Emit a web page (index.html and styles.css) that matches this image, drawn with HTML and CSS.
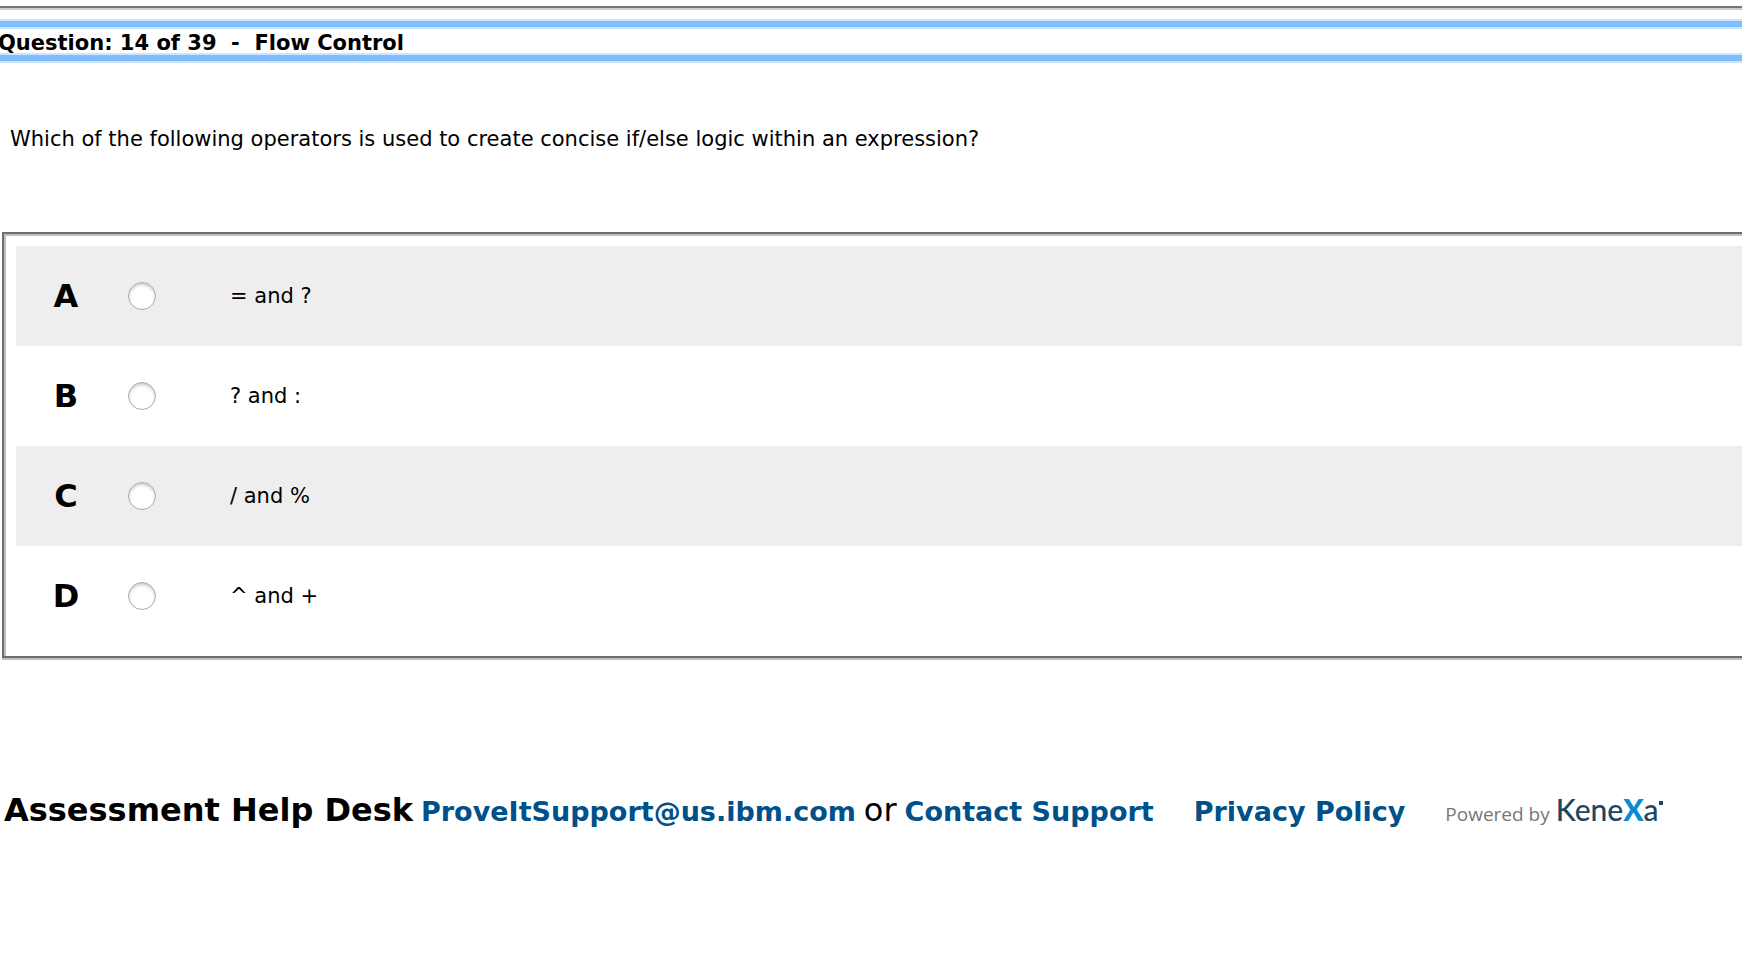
FILE: index.html
```
<!DOCTYPE html>
<html lang="en">
<head>
<meta charset="utf-8">
<title>Question 14 of 39 - Flow Control</title>
<link rel="stylesheet" href="styles.css">
</head>
<body>
<hr class="rule">
<header class="heading">
  <h1 class="heading-text">Question: 14 of 39 &nbsp;- &nbsp;Flow Control</h1>
</header>
<main>
  <p class="question" id="question">Which of the following operators is used to create concise if/else logic within an expression?</p>
  <form class="answers" role="radiogroup" aria-labelledby="question">
    <label class="answer"><span class="letter">A</span><input class="radio" type="radio" name="answer" value="a"><span>= and ?</span></label>
    <label class="answer"><span class="letter">B</span><input class="radio" type="radio" name="answer" value="b"><span>? and :</span></label>
    <label class="answer"><span class="letter">C</span><input class="radio" type="radio" name="answer" value="c"><span>/ and %</span></label>
    <label class="answer"><span class="letter">D</span><input class="radio" type="radio" name="answer" value="d"><span>^ and +</span></label>
  </form>
</main>
<footer class="footer">
  <strong class="desk">Assessment Help Desk</strong>
  <a class="link" href="mailto:ProveItSupport@us.ibm.com">ProveItSupport@us.ibm.com</a>
  <span class="or">or</span>
  <a class="link" href="#support">Contact Support</a>
  <a class="link privacy" href="#privacy">Privacy Policy</a>
  <span class="powered"><span>Powered by</span><span class="brand">Kene<b class="brand-x">X</b>a<i class="brand-mark"></i></span></span>
</footer>
</body>
</html>
```
FILE: styles.css
```
* {
  box-sizing: border-box;
}

body {
  margin: 0;
  background: #fff;
  color: #000;
  font: 21px/26px Verdana, "DejaVu Sans", sans-serif;
  overflow-x: hidden;
}

.rule {
  margin: 6px 0 9px;
  height: 4px;
  border: 0;
  border-top: 2px solid #73737b;
  border-bottom: 2px solid #ccc;
}

.heading {
  border: solid #cce4ff;
  border-width: 2px 0;
}

.heading-text {
  margin: 0;
  padding-top: 3px;
  height: 40px;
  border: solid #80bdff;
  border-width: 6px 0;
  box-shadow: 0 2px #cce4ff, inset 0 2px #cce4ff, inset 0 -2px #cce4ff;
  font-size: 21px;
  line-height: 26px;
  text-indent: -2px;
  white-space: nowrap;
}

.question {
  margin: 63px 10px 80px;
}

.answers {
  margin-left: 2px;
  padding: 12px 0 10px 12px;
  border: solid #6e6e6e;
  border-width: 2px 0 2px 2px;
  box-shadow: inset 2px 2px #c0c0c0, 0 2px #c0c0c0;
}

.answer {
  display: grid;
  grid-template-columns: 100px 90px 1fr;
  column-gap: 12px;
  align-items: center;
  height: 100px;
  line-height: 28px;
}

.answer:nth-child(odd) {
  background: #eee;
}

.letter {
  font-size: 32px;
  font-weight: bold;
  text-align: center;
}

.radio {
  appearance: none;
  width: 28px;
  height: 28px;
  margin: 0;
  border: 1px solid #aaa;
  border-radius: 50%;
  background: #fff;
  box-shadow: inset 0 2px 3px #ccc;
}

.radio:checked {
  background: radial-gradient(circle, #333 0 5px, #fff 6px);
}

.footer {
  display: flex;
  align-items: baseline;
  column-gap: 8px;
  margin: 132px 4px 0;
  line-height: 40px;
  white-space: nowrap;
}

.desk,
.or {
  font-size: 32px;
}

.link {
  color: #00508a;
  font-size: 27px;
  font-weight: bold;
  text-decoration: none;
}

.privacy {
  margin-left: 32px;
}

.powered {
  display: flex;
  align-items: baseline;
  column-gap: 6px;
  margin-left: 32px;
  color: #777;
  font: 19px/38px "Open Sans", sans-serif;
}

.brand {
  color: #1d455f;
  font: 500 30px/38px Lato, sans-serif;
}

.brand-x {
  color: #078bd2;
  font-weight: 900;
}

.brand-mark {
  display: inline-block;
  width: 4px;
  height: 4px;
  background: #1d455f;
  vertical-align: 16px;
}
```
